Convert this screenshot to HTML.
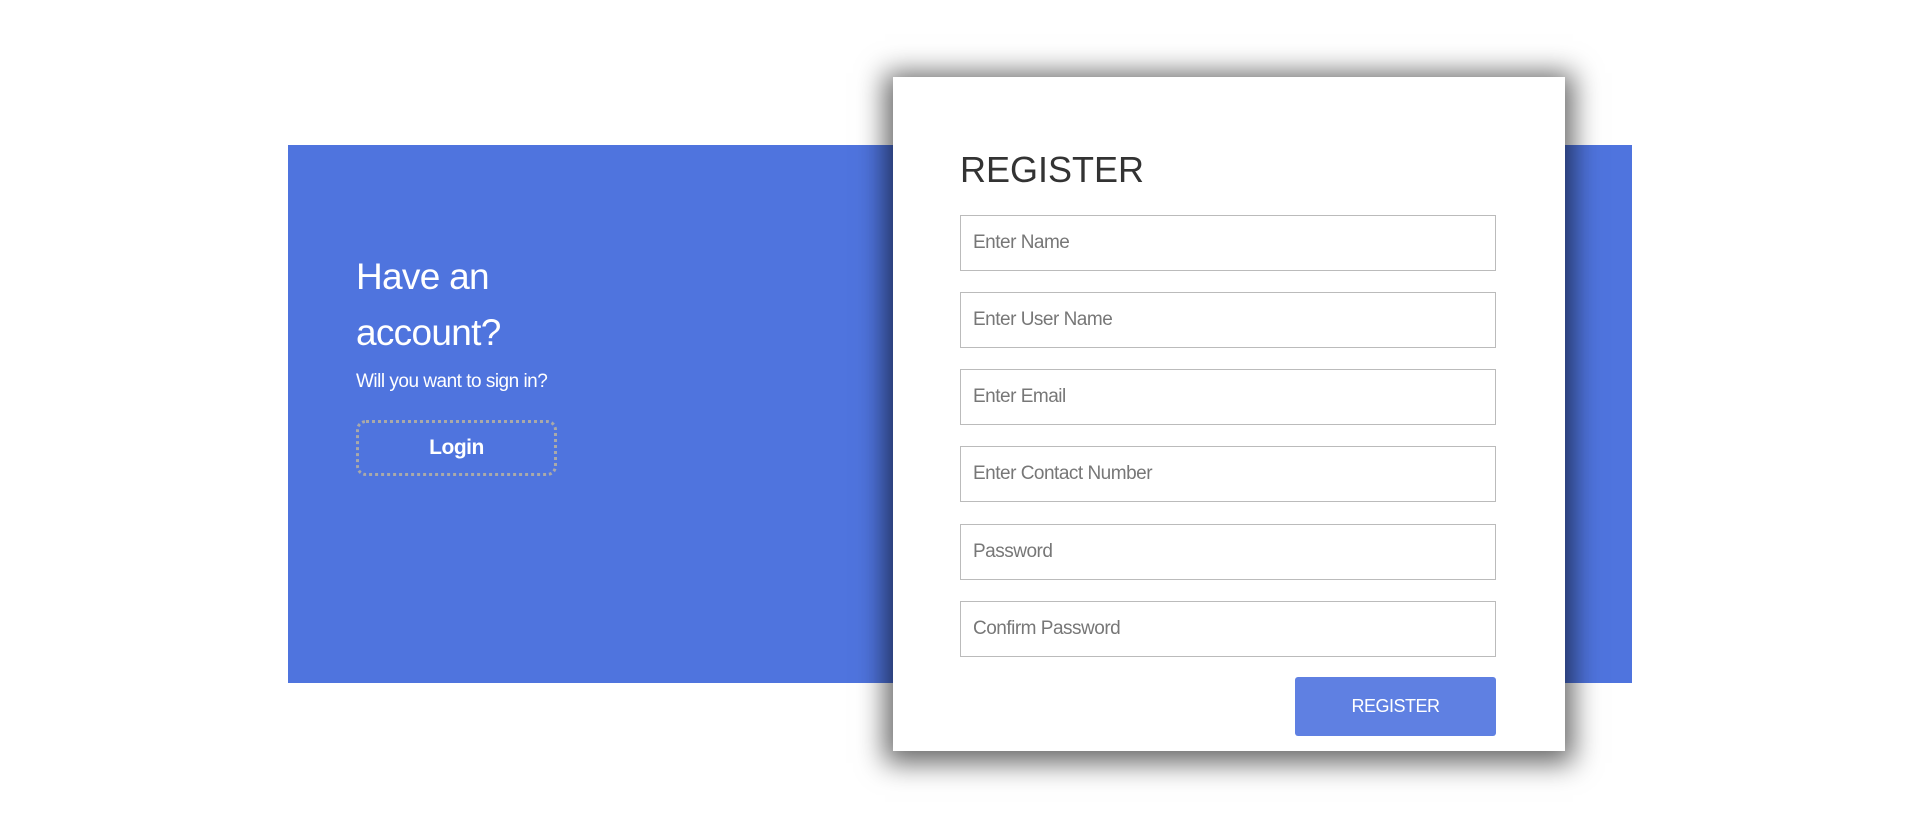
<!DOCTYPE html>
<html><head><meta charset="utf-8"><style>
*{box-sizing:border-box;margin:0;padding:0}
body{width:1920px;height:827px;background:#fff;position:relative;overflow:hidden;font-family:"Liberation Sans",sans-serif}
.panel{position:absolute;left:288px;top:145px;width:1344px;height:538px;background:#4f74de}
.h{position:absolute;left:356px;top:249px;color:#fff;font-size:37px;line-height:56px;letter-spacing:-0.7px}
.s{position:absolute;left:356px;top:371px;color:#fff;font-size:19px;letter-spacing:-0.5px}
.lb{position:absolute;left:356px;top:420px;width:201px;height:56px;border:3px dotted #a9a9a9;border-radius:10px;color:#fff;font-weight:bold;font-size:21px;text-align:center;line-height:50px;letter-spacing:-0.5px}
.card{position:absolute;left:893px;top:77px;width:672px;height:674px;background:#fff;box-shadow:0 4px 26px 8px rgba(0,0,0,0.6)}
.t{position:absolute;left:67px;top:72px;font-size:36px;color:#333;letter-spacing:0}
.in{position:absolute;left:67px;width:536px;height:56px;border:1px solid #bbb;color:#777;font-size:19px;line-height:54px;padding-left:12px;letter-spacing:-0.5px}
.btn{position:absolute;left:402px;top:600px;width:201px;height:59px;background:#5f80e2;border-radius:3px;color:#fff;font-size:18px;text-align:center;line-height:59px;letter-spacing:-0.5px}
</style></head><body>
<div class="panel"></div>
<div class="h">Have an<br>account?</div>
<div class="s">Will you want to sign in?</div>
<div class="lb">Login</div>
<div class="card">
<div class="t">REGISTER</div>
<div class="in" style="top:138px">Enter Name</div>
<div class="in" style="top:215px">Enter User Name</div>
<div class="in" style="top:292px">Enter Email</div>
<div class="in" style="top:369px">Enter Contact Number</div>
<div class="in" style="top:447px">Password</div>
<div class="in" style="top:524px">Confirm Password</div>
<div class="btn">REGISTER</div>
</div>
</body></html>
